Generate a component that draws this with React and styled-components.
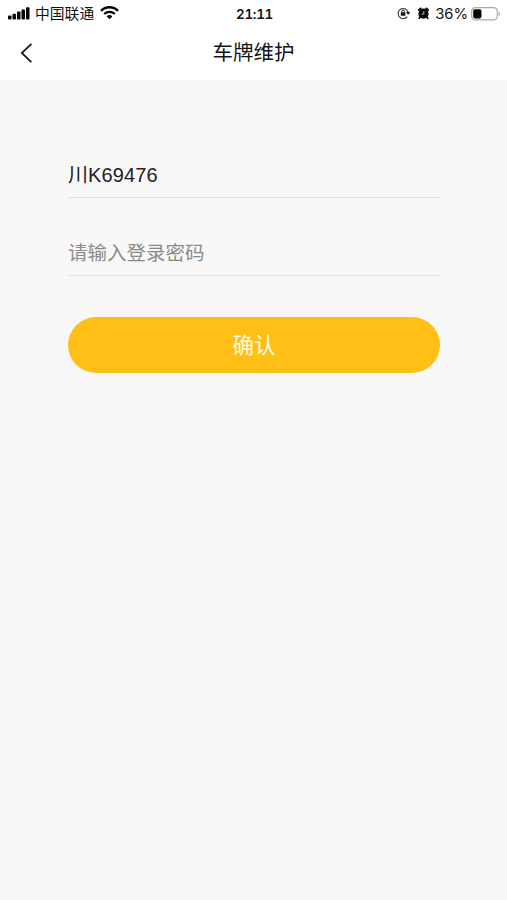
import React from "react";
import styled, { createGlobalStyle } from "styled-components";

function App() {
  return (
    <Container>
      <GlobalStyle />
      <StatusBar>
        <Carrier>
          <SignalIcon />
          <CarrierName>中国联通</CarrierName>
          <WifiIcon />
        </Carrier>
        <Clock>21:11</Clock>
        <Indicators>
          <LockIcon />
          <AlarmIcon />
          <Percent>36%</Percent>
          <BatteryIcon />
        </Indicators>
      </StatusBar>
      <NavBar>
        <BackButton aria-label="返回">
          <svg width="13" height="20" viewBox="0 0 13 20" fill="none">
            <path d="M11.4 0.8 1.8 10 11.4 19.2" stroke="#1c1c1c" strokeWidth="1.8" />
          </svg>
        </BackButton>
        <Title>车牌维护</Title>
      </NavBar>
      <Form>
        <Field>
          <Value>川K69476</Value>
        </Field>
        <Field>
          <Placeholder>请输入登录密码</Placeholder>
        </Field>
        <Submit>确认</Submit>
      </Form>
    </Container>
  );
}

const SignalIcon = () => (
  <svg width="22" height="14" viewBox="0 0 22 14" fill="#080808">
    <rect x="0" y="8.4" width="3.5" height="4.1" rx="0.9" />
    <rect x="4.5" y="6.7" width="3.5" height="5.8" rx="0.9" />
    <rect x="9" y="4.4" width="3.5" height="8.1" rx="0.9" />
    <rect x="13.5" y="2.5" width="3.5" height="10" rx="0.9" />
    <rect x="18" y="0.3" width="3.5" height="12.2" rx="0.9" />
  </svg>
);

const WifiIcon = () => (
  <svg width="19" height="15" viewBox="0 0 19 15" fill="none">
    <path d="M1 4.9a12 12 0 0 1 17 0" stroke="#080808" strokeWidth="2.5" />
    <path d="M4.2 8a7.6 7.6 0 0 1 10.6 0" stroke="#080808" strokeWidth="2.3" />
    <path d="M9.5 13.3 6.6 10.4a4.2 4.2 0 0 1 5.8 0z" fill="#080808" />
  </svg>
);

const LockIcon = () => (
  <svg width="14" height="13" viewBox="0 0 14 13" fill="none">
    <path
      d="M10.3 9.6A5.1 5.1 0 1 1 11.1 5.2"
      stroke="#333"
      strokeWidth="1.1"
    />
    <path d="M8.9 5h4.3l-2 3z" fill="#1a1a1a" />
    <rect x="3.8" y="5.3" width="4.6" height="3.4" rx="0.5" fill="#1a1a1a" />
    <path d="M4.8 5.6V4.4a1.3 1.3 0 0 1 2.6 0v1.2" stroke="#1a1a1a" />
  </svg>
);

const AlarmIcon = () => (
  <svg width="13" height="13" viewBox="0 0 13 13" fill="none">
    <circle cx="6.5" cy="6.7" r="5.1" fill="#0c0c0c" />
    <path
      d="M1.9 3 3.6 1.5M11.1 3 9.4 1.5"
      stroke="#0c0c0c"
      strokeWidth="2"
      strokeLinecap="round"
    />
    <path
      d="m3 10.3-.8 1M10 10.3l.8 1"
      stroke="#0c0c0c"
      strokeWidth="1.8"
      strokeLinecap="round"
    />
    <path d="M6.8 4.2v2.9H4.6" stroke="#ddd" strokeWidth="0.8" />
  </svg>
);

const BatteryIcon = () => (
  <svg width="30" height="14" viewBox="0 0 30 14" fill="none">
    <rect
      x="0.7"
      y="0.7"
      width="25.6"
      height="12.2"
      rx="3.6"
      stroke="#a9a9a9"
      strokeWidth="1.2"
    />
    <rect x="2.2" y="2.2" width="8.3" height="9.2" rx="1.8" fill="#050505" />
    <path d="M27.6 4.6c1.9.7 1.9 3.7 0 4.4z" fill="#a9a9a9" />
  </svg>
);

export default App;

const GlobalStyle = createGlobalStyle`
  body {
    margin: 0;
    background: #f8f8f8;
    font-family: Inter, "Noto Sans CJK SC", sans-serif;
  }
`;

const Container = styled.main`
  display: flex;
  flex-direction: column;
  min-height: 900px;
  background: #f8f8f8;
`;

const StatusBar = styled.div`
  display: grid;
  grid-template-columns: 1fr auto 1fr;
  align-items: center;
  height: 27px;
  padding: 0 6px 0 8px;
  background: #fff;
  color: #111;
  box-sizing: border-box;
`;

const Carrier = styled.div`
  display: flex;
  align-items: center;
`;

const CarrierName = styled.span`
  margin: 0 6px 0 5px;
  font-size: 14.8px;
  line-height: 26px;
`;

const Clock = styled.span`
  font-size: 13.5px;
  font-weight: 600;
  font-variant-numeric: tabular-nums;
  letter-spacing: -0.3px;
  line-height: 26px;
`;

const Indicators = styled.div`
  display: flex;
  align-items: center;
  justify-content: flex-end;

  svg:first-child {
    margin-right: 6px;
  }
`;

const Percent = styled.span`
  margin: 0 3px 0 5px;
  font-size: 14.8px;
  line-height: 26px;
`;

const NavBar = styled.header`
  display: grid;
  grid-template-columns: 60px 1fr 60px;
  align-items: center;
  height: 53px;
  padding-bottom: 2px;
  background: #fff;
  box-sizing: border-box;
`;

const BackButton = styled.button`
  display: flex;
  padding: 0 0 0 20px;
  border: 0;
  background: transparent;
`;

const Title = styled.h1`
  margin: 0;
  color: #151515;
  font-size: 20.5px;
  font-weight: 400;
  line-height: 30px;
  text-align: center;
`;

const Form = styled.section`
  display: flex;
  flex-direction: column;
  padding: 73px 67px 0 68px;
`;

const Field = styled.div`
  display: flex;
  align-items: center;
  height: 45px;
  margin-bottom: 33px;
  padding-bottom: 4px;
  border-bottom: 1px solid #e2e2e2;
  box-sizing: border-box;

  & + & {
    margin-bottom: 41px;
  }
`;

const Value = styled.span`
  color: #222;
  font-family: "Liberation Sans", "Noto Sans CJK SC", sans-serif;
  font-size: 20px;
  letter-spacing: 0.1px;
`;

const Placeholder = styled.span`
  color: #8a8a8a;
  font-size: 19.5px;
`;

const Submit = styled.button`
  height: 56px;
  padding: 0;
  border: 0;
  border-radius: 28px;
  background: #ffbf17;
  color: #fffbe8;
  font-family: inherit;
  font-size: 21.5px;
  line-height: 56px;
`;
